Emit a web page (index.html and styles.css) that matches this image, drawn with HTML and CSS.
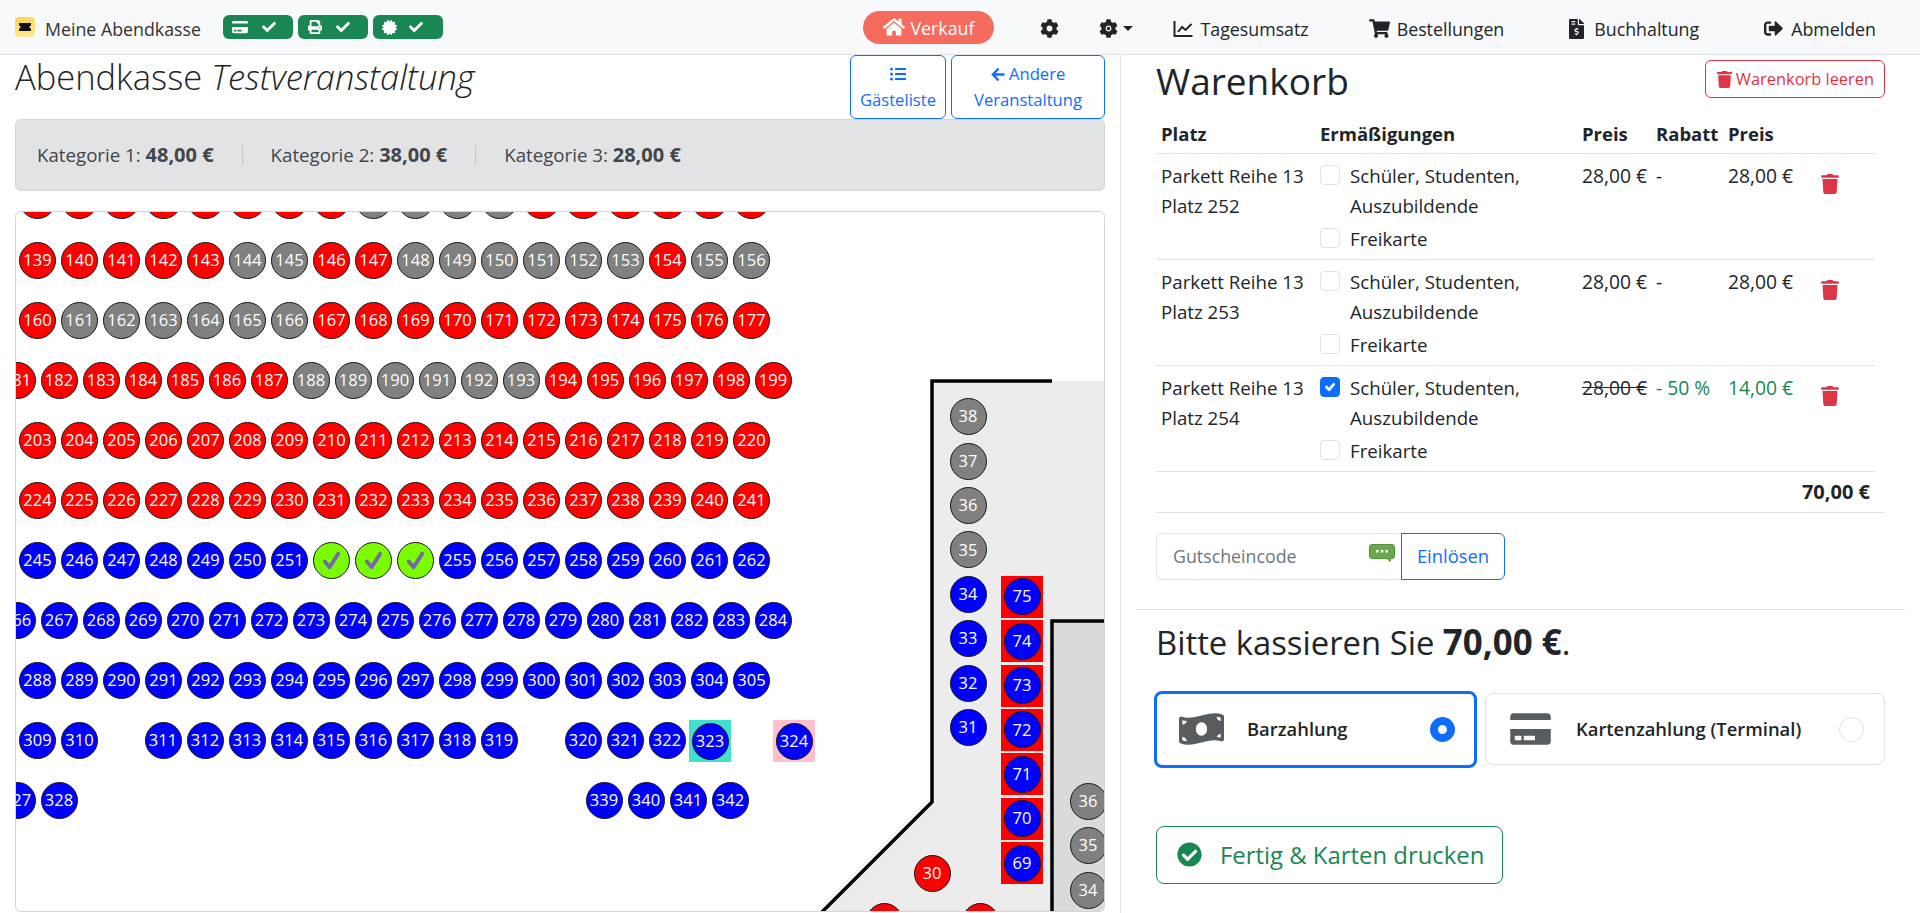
FILE: index.html
```html
<!DOCTYPE html>
<html lang="de">
<head>
    <meta charset="UTF-8">
    <meta name="viewport" content="width=device-width, initial-scale=1.0">
    <title>Meine Abendkasse</title>
    <link rel="stylesheet" href="styles.css">
</head>
<body>
    <svg class="icon-defs" xmlns="http://www.w3.org/2000/svg">
        <symbol id="i-home" viewBox="0 0 576 512"><path d="M280.37 148.26L96 300.11V464a16 16 0 0 0 16 16l112.06-.29a16 16 0 0 0 15.92-16V368a16 16 0 0 1 16-16h64a16 16 0 0 1 16 16v95.64a16 16 0 0 0 16 16.05L464 480a16 16 0 0 0 16-16V300L295.67 148.26a12.19 12.19 0 0 0-15.3 0zM571.6 251.47L488 182.56V44.05a12 12 0 0 0-12-12h-56a12 12 0 0 0-12 12v72.61L318.47 43a48 48 0 0 0-61 0L4.34 251.47a12 12 0 0 0-1.6 16.9l25.5 31A12 12 0 0 0 45.15 301l235.22-193.74a12.19 12.19 0 0 1 15.3 0L530.9 301a12 12 0 0 0 16.9-1.6l25.5-31a12 12 0 0 0-1.7-16.93z"/></symbol>
        <symbol id="i-cog" viewBox="0 0 512 512"><path d="M487.4 315.7l-42.6-24.6c4.3-23.2 4.3-47 0-70.2l42.6-24.6c4.9-2.8 7.1-8.6 5.5-14-11.1-35.6-30-67.8-54.7-94.6-3.8-4.1-10-5.1-14.8-2.3L380.8 110c-17.9-15.4-38.5-27.3-60.8-35.1V25.8c0-5.6-3.9-10.5-9.4-11.7-36.7-8.2-74.3-7.8-109.2 0-5.5 1.2-9.4 6.1-9.4 11.7V75c-22.2 7.9-42.8 19.8-60.8 35.1L88.7 85.5c-4.9-2.8-11-1.9-14.8 2.3-24.7 26.7-43.6 58.9-54.7 94.6-1.7 5.4.6 11.2 5.5 14L67.3 221c-4.3 23.2-4.3 47 0 70.2l-42.6 24.6c-4.9 2.8-7.1 8.6-5.5 14 11.1 35.6 30 67.8 54.7 94.6 3.8 4.1 10 5.1 14.8 2.3l42.6-24.6c17.9 15.4 38.5 27.3 60.8 35.1v49.2c0 5.6 3.9 10.5 9.4 11.7 36.7 8.2 74.3 7.8 109.2 0 5.5-1.2 9.4-6.1 9.4-11.7v-49.2c22.2-7.9 42.8-19.8 60.8-35.1l42.6 24.6c4.9 2.8 11 1.9 14.8-2.3 24.7-26.7 43.6-58.9 54.7-94.6 1.5-5.5-.7-11.3-5.6-14.1zM256 336c-44.1 0-80-35.9-80-80s35.9-80 80-80 80 35.9 80 80-35.9 80-80 80z"/></symbol>
        <symbol id="i-trash" viewBox="0 0 448 512"><path d="M432 32H312l-9.4-18.7A24 24 0 0 0 281.1 0H166.8a23.72 23.72 0 0 0-21.4 13.3L136 32H16A16 16 0 0 0 0 48v32a16 16 0 0 0 16 16h416a16 16 0 0 0 16-16V48a16 16 0 0 0-16-16zM53.2 467a48 48 0 0 0 47.9 45h245.8a48 48 0 0 0 47.9-45L416 128H32z"/></symbol>
        <symbol id="i-check" viewBox="0 0 512 512"><path d="M173.898 439.404l-166.4-166.4c-9.997-9.997-9.997-26.206 0-36.204l36.203-36.204c9.997-9.998 26.207-9.998 36.204 0L192 312.69 432.095 72.596c9.997-9.997 26.207-9.997 36.204 0l36.203 36.204c9.997 9.997 9.997 26.206 0 36.204l-294.4 294.401c-9.998 9.997-26.207 9.997-36.204-.001z"/></symbol>
        <symbol id="i-card" viewBox="0 0 576 512"><path d="M0 432c0 26.5 21.5 48 48 48h480c26.5 0 48-21.5 48-48V256H0v176zm192-68c0-6.6 5.4-12 12-12h136c6.6 0 12 5.4 12 12v40c0 6.6-5.4 12-12 12H204c-6.6 0-12-5.4-12-12v-40zm-128 0c0-6.6 5.4-12 12-12h72c6.6 0 12 5.4 12 12v40c0 6.6-5.4 12-12 12H76c-6.6 0-12-5.4-12-12v-40zM576 80v48H0V80c0-26.5 21.5-48 48-48h480c26.5 0 48 21.5 48 48z"/></symbol>
    </svg>

    <nav class="navbar">
        <a class="brand">
            <span class="brand-logo">
                <svg viewBox="0 0 20 20" width="20" height="20"><path class="ticket" d="M4 6h12v2.4a1.6 1.6 0 0 0 0 3.2V14H4v-2.4a1.6 1.6 0 0 0 0-3.2z"/></svg>
            </span>
            <span class="brand-name">Meine Abendkasse</span>
        </a>
        <div class="status-badges">
            <span class="status-badge">
                <svg class="badge-icon-card" fill="currentColor"><use href="#i-card"/></svg>
                <svg class="badge-check" fill="currentColor"><use href="#i-check"/></svg>
            </span>
            <span class="status-badge">
                <svg class="badge-icon-print" viewBox="0 0 512 512" fill="currentColor"><path d="M448 192V77.25c0-8.49-3.37-16.62-9.37-22.63L393.37 9.37c-6-6-14.14-9.37-22.63-9.37H96C78.33 0 64 14.33 64 32v160c-35.35 0-64 28.65-64 64v112c0 8.84 7.16 16 16 16h48v96c0 17.67 14.33 32 32 32h320c17.67 0 32-14.33 32-32v-96h48c8.84 0 16-7.16 16-16V256c0-35.35-28.65-64-64-64zm-64 256H128v-96h256v96zm0-224H128V64h192v48c0 8.84 7.16 16 16 16h48v96zm48 72c-13.25 0-24-10.75-24-24 0-13.26 10.75-24 24-24s24 10.74 24 24c0 13.25-10.75 24-24 24z"/></svg>
                <svg class="badge-check" fill="currentColor"><use href="#i-check"/></svg>
            </span>
            <span class="status-badge">
                <svg class="badge-icon-cert" viewBox="0 0 512 512" fill="currentColor"><path d="M458.622 255.92l45.985-45.005c13.708-12.977 7.316-36.039-10.664-40.339l-62.65-15.99 17.661-62.015c4.991-17.838-11.829-34.663-29.661-29.671l-61.994 17.667-15.984-62.671C337.085.197 313.765-6.276 300.99 7.228L256 53.57 211.011 7.229c-12.63-13.351-36.047-7.234-40.325 10.668l-15.984 62.671-61.995-17.667C74.87 57.907 58.056 74.738 63.046 92.572l17.661 62.015-62.65 15.99C.069 174.878-6.31 197.944 7.392 210.915l45.985 45.005-45.985 45.004c-13.708 12.977-7.316 36.039 10.664 40.339l62.65 15.99-17.661 62.015c-4.991 17.838 11.829 34.663 29.661 29.671l61.994-17.667 15.984 62.671c4.439 18.575 27.696 24.018 40.325 10.668L256 458.61l44.989 46.001c12.5 13.488 35.987 7.486 40.325-10.668l15.984-62.671 61.994 17.667c17.83 4.992 34.652-11.83 29.661-29.671l-17.661-62.015 62.65-15.99c17.98-4.3 24.371-27.362 10.664-40.339l-45.984-45.004z"/></svg>
                <svg class="badge-check" fill="currentColor"><use href="#i-check"/></svg>
            </span>
        </div>

        <div class="nav-right">
            <a class="nav-sale">
                <svg class="icon-home" fill="currentColor"><use href="#i-home"/></svg>
                <span class="nav-sale-text">Verkauf</span>
            </a>
            <a class="nav-icon"><svg class="icon-cog" fill="currentColor"><use href="#i-cog"/></svg></a>
            <a class="nav-icon nav-dropdown">
                <svg class="icon-cog" viewBox="0 0 512 512" fill="currentColor">
                    <use href="#i-cog"/>
                    <circle cx="256" cy="256" r="45"/>
                </svg>
                <span class="caret"></span>
            </a>
            <a class="nav-link nav-first">
                <svg class="icon-chart" viewBox="0 0 20 18" fill="none" stroke="currentColor" stroke-width="2">
                    <path d="M1.5 1v15h18"/>
                    <path d="M5 12l4-5 3.500 3 6-6"/>
                </svg>
                Tagesumsatz
            </a>
            <a class="nav-link nav-orders">
                <svg class="icon-cart" viewBox="0 0 576 512" fill="currentColor"><path d="M528.12 301.319l47.273-208C578.806 78.301 567.391 64 551.99 64H159.208l-9.166-44.81C147.758 8.021 137.93 0 126.529 0H24C10.745 0 0 10.745 0 24v16c0 13.255 10.745 24 24 24h69.883l70.248 343.435C147.325 417.1 136 435.222 136 456c0 30.928 25.072 56 56 56s56-25.072 56-56c0-15.674-6.447-29.835-16.824-40h209.647C430.447 426.165 424 440.326 424 456c0 30.928 25.072 56 56 56s56-25.072 56-56c0-22.172-12.888-41.332-31.579-50.405l5.517-24.276c3.413-15.018-8.002-29.319-23.403-29.319H218.117l-6.545-32h293.145c11.206 0 20.92-7.754 23.403-18.681z"/></svg>
                Bestellungen
            </a>
            <a class="nav-link">
                <svg class="icon-invoice" viewBox="0 0 384 512">
                    <path fill="currentColor" d="M224 136V0H24C10.700 0 0 10.700 0 24v464c0 13.300 10.700 24 24 24h336c13.300 0 24-10.700 24-24V160H248c-13.200 0-24-10.800-24-24z"/>
                    <path fill="currentColor" d="M384 121.900c0-6.300-2.500-12.400-7-16.900L279.100 7c-4.500-4.500-10.600-7-17-7H256v128h128z"/>
                    <path fill="none" stroke="#f8f9fa" stroke-width="32" d="M64 64h96M64 128h96"/>
                    <path fill="none" stroke="#f8f9fa" stroke-width="30" d="M240 260h-62c-36 0-36 62 0 62h32c36 0 36 62 0 62h-66M194 230v30M194 384v30"/>
                </svg>
                Buchhaltung
            </a>
            <a class="nav-link">
                <svg class="icon-signout" viewBox="0 0 512 512" fill="currentColor"><path d="M497 273L329 441c-15 15-41 4.500-41-17v-96H152c-13.300 0-24-10.700-24-24v-96c0-13.300 10.700-24 24-24h136V88c0-21.400 25.900-32 41-17l168 168c9.300 9.400 9.300 24.600 0 34zM192 436v-40c0-6.600-5.400-12-12-12H96c-17.700 0-32-14.300-32-32V160c0-17.700 14.300-32 32-32h84c6.600 0 12-5.400 12-12V76c0-6.600-5.400-12-12-12H96c-53 0-96 43-96 96v192c0 53 43 96 96 96h84c6.600 0 12-5.400 12-12z"/></svg>
                Abmelden
            </a>
        </div>
    </nav>

    <div class="page">
        <main class="left-col">
            <div class="title-row">
                <h1 class="page-title">Abendkasse <em>Testveranstaltung</em></h1>
                <div class="title-buttons">
                    <a class="btn-outline btn-guests">
                        <svg class="icon-list" viewBox="0 0 512 512" fill="currentColor"><path d="M48 48a48 48 0 1 0 48 48 48 48 0 0 0-48-48zm0 160a48 48 0 1 0 48 48 48 48 0 0 0-48-48zm0 160a48 48 0 1 0 48 48 48 48 0 0 0-48-48zm448 16H176a16 16 0 0 0-16 16v32a16 16 0 0 0 16 16h320a16 16 0 0 0 16-16v-32a16 16 0 0 0-16-16zm0-320H176a16 16 0 0 0-16 16v32a16 16 0 0 0 16 16h320a16 16 0 0 0 16-16V80a16 16 0 0 0-16-16zm0 160H176a16 16 0 0 0-16 16v32a16 16 0 0 0 16 16h320a16 16 0 0 0 16-16v-32a16 16 0 0 0-16-16z"/></svg>
                        <br>Gästeliste
                    </a>
                    <a class="btn-outline btn-event">
                        <svg class="icon-arrow" viewBox="0 0 448 512" fill="currentColor"><path d="M257.500 445.100l-22.200 22.200c-9.400 9.400-24.600 9.400-33.900 0L7 273c-9.400-9.400-9.400-24.600 0-33.900L201.400 44.700c9.400-9.400 24.600-9.400 33.900 0l22.200 22.200c9.500 9.500 9.300 25-.4 34.300L136.600 216H424c13.300 0 24 10.700 24 24v32c0 13.300-10.700 24-24 24H136.600l120.500 114.800c9.800 9.300 10 24.800.4 34.300z"/></svg>
                        Andere<br>Veranstaltung
                    </a>
                </div>
            </div>

            <div class="price-bar">
                <span>Kategorie 1: <b>48,00 €</b></span>
                <span class="price-sep"></span>
                <span>Kategorie 2: <b>38,00 €</b></span>
                <span class="price-sep"></span>
                <span>Kategorie 3: <b>28,00 €</b></span>
            </div>

            <div class="seatmap" id="seatmap">
                <svg class="stage" width="1090" height="700">
                    <!-- offset of the canvas on the page: 16, 212 -->
                    <polygon class="area-light" points="916,169 1090,169 1090,700 806,700 916,590"/>
                    <polygon class="area-dark" points="1036,409 1090,409 1090,700 1036,700"/>
                    <polyline class="wall" points="1036,169 916,169 916,590 806,700"/>
                    <polyline class="wall" points="1090,409 1036,409 1036,700"/>
                </svg>
            </div>
        </main>

        <aside class="right-col">
            <div class="cart-head">
                <h2 class="cart-title">Warenkorb</h2>
                <a class="btn-clear">
                    <svg class="icon-trash-sm" fill="currentColor"><use href="#i-trash"/></svg>
                    Warenkorb leeren
                </a>
            </div>

            <table class="cart-table">
                <colgroup>
                    <col class="col-seat"><col class="col-reduction"><col class="col-price"><col class="col-discount"><col class="col-final"><col>
                </colgroup>
                <thead>
                    <tr>
                        <th>Platz</th>
                        <th>Ermäßigungen</th>
                        <th>Preis</th>
                        <th>Rabatt</th>
                        <th>Preis</th>
                        <th></th>
                    </tr>
                </thead>
                <tbody>
                    <tr>
                        <td>Parkett Reihe 13<br>Platz 252</td>
                        <td>
                            <label class="check-row"><span class="check-box"></span><span>Schüler, Studenten, Auszubildende</span></label>
                            <label class="check-row"><span class="check-box"></span><span>Freikarte</span></label>
                        </td>
                        <td class="money">28,00 €</td>
                        <td class="money">-</td>
                        <td class="money">28,00 €</td>
                        <td><svg class="icon-trash" fill="currentColor"><use href="#i-trash"/></svg></td>
                    </tr>
                    <tr>
                        <td>Parkett Reihe 13<br>Platz 253</td>
                        <td>
                            <label class="check-row"><span class="check-box"></span><span>Schüler, Studenten, Auszubildende</span></label>
                            <label class="check-row"><span class="check-box"></span><span>Freikarte</span></label>
                        </td>
                        <td class="money">28,00 €</td>
                        <td class="money">-</td>
                        <td class="money">28,00 €</td>
                        <td><svg class="icon-trash" fill="currentColor"><use href="#i-trash"/></svg></td>
                    </tr>
                    <tr>
                        <td>Parkett Reihe 13<br>Platz 254</td>
                        <td>
                            <label class="check-row">
                                <span class="check-box checked">
                                    <svg viewBox="0 0 20 20" fill="none" stroke="#fff" stroke-width="3" stroke-linecap="round" stroke-linejoin="round"><path d="M6 10l3 3 5-6"/></svg>
                                </span>
                                <span>Schüler, Studenten, Auszubildende</span>
                            </label>
                            <label class="check-row"><span class="check-box"></span><span>Freikarte</span></label>
                        </td>
                        <td class="money"><s>28,00 €</s></td>
                        <td class="money text-green">- 50 %</td>
                        <td class="money text-green">14,00 €</td>
                        <td><svg class="icon-trash" fill="currentColor"><use href="#i-trash"/></svg></td>
                    </tr>
                </tbody>
            </table>
            <div class="cart-total">70,00 €</div>

            <div class="voucher">
                <div class="voucher-input">
                    <span>Gutscheincode</span>
                    <svg class="icon-voucher" viewBox="0 0 26 18">
                        <path fill="#6aa84f" stroke="#55903c" stroke-width="1" d="M3 .5h20a2.500 2.500 0 0 1 2.500 2.500v9a2.500 2.500 0 0 1-2.500 2.500h-1.500l-.5 3-3-3H3A2.500 2.500 0 0 1 .5 12V3A2.500 2.500 0 0 1 3 .5z"/>
                        <path fill="#fff" d="M7 6h2.500v2.500H7zM11.800 6h2.500v2.500h-2.500zM16.500 6H19v2.500h-2.500z"/>
                    </svg>
                </div>
                <a class="voucher-btn">Einlösen</a>
            </div>

            <hr class="section-line">

            <h3 class="pay-title">Bitte kassieren Sie <b>70,00 €</b>.</h3>

            <div class="pay-options">
                <div class="pay-option selected">
                    <svg class="pay-icon" viewBox="0 0 640 512" fill="currentColor"><path d="M621.160 54.460C582.370 38.190 543.550 32 504.750 32c-123.170-.01-246.330 62.340-369.500 62.340-30.890 0-61.760-3.920-92.650-13.720-3.470-1.100-6.950-1.620-10.350-1.620C15.040 79 0 92.320 0 110.810v317.260c0 12.630 7.230 24.600 18.840 29.460C57.630 473.810 96.450 480 135.250 480c123.170 0 246.340-62.350 369.510-62.350 30.890 0 61.760 3.920 92.650 13.720 3.470 1.100 6.950 1.620 10.350 1.620 17.210 0 32.250-13.320 32.250-31.810V83.930c-.01-12.640-7.240-24.600-18.850-29.470zM48 132.220c20.120 5.040 41.120 7.570 62.720 8.930C104.840 170.540 79 192.690 48 192.690v-60.470zm0 285v-47.780c34.370 0 62.180 27.270 63.710 61.400-22.530-1.810-43.590-6.310-63.710-13.620zM320 352c-44.190 0-80-42.990-80-96 0-53.020 35.820-96 80-96s80 42.980 80 96c0 53.030-35.830 96-80 96zm272 27.780c-17.520-4.390-35.710-6.850-54.320-8.440 5.870-26.080 27.500-45.880 54.320-49.280v57.720zm0-236.110c-30.890-3.910-54.860-29.700-55.810-61.550 19.540 2.170 38.090 6.230 55.810 12.660v48.890z"/></svg>
                    <span class="pay-label">Barzahlung</span>
                    <span class="pay-radio"></span>
                </div>
                <div class="pay-option">
                    <svg class="pay-icon" fill="currentColor"><use href="#i-card"/></svg>
                    <span class="pay-label">Kartenzahlung (Terminal)</span>
                    <span class="pay-radio"></span>
                </div>
            </div>

            <a class="btn-finish">
                <svg class="icon-finish" viewBox="0 0 512 512" fill="currentColor"><path d="M504 256c0 136.967-111.033 248-248 248S8 392.967 8 256 119.033 8 256 8s248 111.033 248 248zM227.314 387.314l184-184c6.248-6.248 6.248-16.379 0-22.627l-22.627-22.627c-6.248-6.249-16.379-6.250-22.628 0L216 308.118l-70.059-70.059c-6.248-6.248-16.379-6.248-22.628 0l-22.627 22.627c-6.248 6.248-6.248 16.379 0 22.627l104 104c6.249 6.249 16.379 6.249 22.628.001z"/></svg>
                Fertig &amp; Karten drucken
            </a>
        </aside>
    </div>

    <script src="seatmap.js"></script>
</body>
</html>
```

FILE: styles.css
```css
* {
    box-sizing: border-box;
    margin: 0;
    padding: 0;
}

html, body {
    height: 100%;
    overflow: hidden;
}

body {
    display: flex;
    flex-direction: column;
    background-color: #fff;
    color: #212529;
    font-family: 'Open Sans', 'Noto Sans', sans-serif;
    font-size: 18.7px;
    line-height: 30px;
}

.icon-defs {
    display: none;
}

/* Navbar */
.navbar {
    display: flex;
    align-items: center;
    flex: 0 0 55px;
    padding: 0 44px 0 15px;
    background-color: #f8f9fa;
    border-bottom: 1px solid #dee2e6;
    font-size: 17.8px;
}

.brand {
    display: flex;
    align-items: center;
    gap: 10px;
    margin-right: 22px;
    color: #333;
}

.brand-name {
    padding-top: 3px;
}

.brand-logo {
    width: 20px;
    height: 20px;
    border-radius: 4px;
    background: linear-gradient(160deg, #ffd54f, #ffe99a);
}

.brand-logo svg {
    display: block;
}

.ticket {
    fill: #111;
}

.status-badges {
    display: flex;
    gap: 5px;
}

.status-badge {
    display: flex;
    align-items: center;
    height: 24px;
    padding-left: 9px;
    background-color: #198754;
    border-radius: 6px;
    color: #fff;
    width: 70px;
}

.badge-icon-card {
    width: 16px;
    height: 14px;
    margin-right: 14px;
}

.badge-icon-print {
    width: 14px;
    height: 14px;
    margin: 0 14px 0 1px;
}

.badge-icon-cert {
    width: 15px;
    height: 15px;
    margin-right: 12px;
}

.badge-check {
    width: 14px;
    height: 14px;
}

.nav-right {
    display: flex;
    align-items: center;
    margin-left: auto;
    color: #212529;
}

.nav-sale {
    display: flex;
    align-items: center;
    gap: 6px;
    height: 33px;
    padding: 0 20px;
    margin-right: 46px;
    background-color: #f56c5e;
    border-radius: 17px;
    color: #fff;
}

.nav-sale-text {
    padding-top: 2px;
}

.icon-home {
    width: 22px;
    height: 20px;
}

.nav-icon {
    display: flex;
    align-items: center;
    padding-top: 3px;
    margin-right: 40px;
}

.icon-cog {
    width: 19px;
    height: 19px;
}

.caret {
    width: 0;
    height: 0;
    margin-left: 5px;
    border-top: 5px solid #212529;
    border-left: 5px solid transparent;
    border-right: 5px solid transparent;
}

.nav-link {
    display: flex;
    align-items: center;
    padding-top: 3px;
    margin-left: 65px;
}

.nav-first {
    margin-left: 0;
}

.nav-orders {
    margin-left: 60px;
}

.icon-chart {
    width: 20px;
    height: 18px;
    margin-right: 7px;
}

.icon-cart {
    width: 21px;
    height: 19px;
    margin-right: 7px;
}

.icon-invoice {
    width: 15px;
    height: 20px;
    margin-right: 10px;
}

.icon-signout {
    width: 19px;
    height: 19px;
    margin-right: 8px;
}

/* Page columns */
.page {
    display: flex;
    flex: 1;
    min-height: 0;
}

.left-col {
    display: flex;
    flex-direction: column;
    width: 1121px;
    padding: 0 15px 1px;
    border-right: 1px solid #dee2e6;
}

.title-row {
    display: flex;
    justify-content: space-between;
    height: 64px;
}

.page-title {
    font-size: 34.5px;
    font-weight: 300;
    line-height: 44px;
    color: #212529;
}

.title-buttons {
    display: flex;
    gap: 5px;
}

.btn-outline {
    display: block;
    padding: 5px 0;
    border: 1px solid #0d6efd;
    border-radius: 6px;
    color: #0d6efd;
    font-size: 16.6px;
    text-align: center;
    line-height: 26px;
}

.btn-guests {
    width: 96px;
}

.btn-event {
    width: 154px;
}

.icon-list {
    width: 18px;
    height: 16px;
    vertical-align: -2px;
}

.icon-arrow {
    width: 14px;
    height: 15px;
    vertical-align: -2px;
}

.price-bar {
    display: flex;
    align-items: center;
    gap: 28px;
    flex: 0 0 72px;
    padding-left: 21px;
    background-color: #e2e3e5;
    border: 1px solid #d3d6d8;
    border-radius: 6px;
    color: #41464b;
}

.price-bar b {
    font-size: 20px;
}

.price-sep {
    width: 1px;
    height: 20px;
    background-color: #c2c4c6;
}

/* Seat plan: seats are placed by seatmap.js */
.seatmap {
    position: relative;
    flex: 1;
    margin-top: 20px;
    overflow: hidden;
    border: 1px solid #d5d5d5;
    border-radius: 6px;
}

.stage {
    position: absolute;
    left: 0;
    top: 0;
}

.area-light {
    fill: #ececec;
}

.area-dark {
    fill: #dadada;
}

.wall {
    fill: none;
    stroke: #000;
    stroke-width: 3.5;
}

.seat {
    position: absolute;
    display: flex;
    align-items: center;
    justify-content: center;
    width: 37px;
    height: 37px;
    border: 1.5px solid #1a1a1a;
    border-radius: 50%;
    color: #fff;
    font-size: 16.5px;
    line-height: 1;
}

.seat.free {
    background-color: #00f;
}

.seat.sold {
    background-color: #f00;
}

.seat.blocked {
    background-color: #808080;
}

.seat.chosen {
    background-color: #7cfc00;
}

.seat.chosen svg {
    width: 23px;
    height: 23px;
}

.seat-mark {
    position: absolute;
    width: 42px;
    height: 42px;
}

.seat-mark.red {
    background-color: #f00;
}

.seat-mark.teal {
    background-color: #40e0d0;
}

.seat-mark.pink {
    background-color: #ffc0cb;
}

/* Cart */
.right-col {
    flex: 1;
    padding: 0 35px;
}

.cart-head {
    display: flex;
    align-items: flex-start;
    justify-content: space-between;
    height: 60px;
}

.cart-title {
    font-size: 37px;
    font-weight: 400;
    line-height: 52px;
}

.btn-clear {
    display: flex;
    align-items: center;
    gap: 4px;
    height: 38px;
    margin-top: 5px;
    padding: 0 10px 0 11px;
    border: 1px solid #dc3545;
    border-radius: 6px;
    color: #dc3545;
    font-size: 16.4px;
}

.icon-trash-sm {
    width: 15px;
    height: 17px;
}

.cart-table {
    width: 719px;
    table-layout: fixed;
    border-collapse: collapse;
    color: #212529;
}

.col-seat {
    width: 159px;
}

.col-reduction {
    width: 262px;
}

.col-price {
    width: 74px;
}

.col-discount {
    width: 72px;
}

.col-final {
    width: 93px;
}

.cart-table th {
    height: 38px;
    padding: 0 5px;
    text-align: left;
    font-size: 18.5px;
    font-weight: 700;
    white-space: nowrap;
    border-bottom: 1px solid #dee2e6;
}

.cart-table td {
    height: 106px;
    padding: 7px 5px 5px;
    vertical-align: top;
    border-bottom: 1px solid #dee2e6;
}

.cart-table td.money {
    font-size: 19.3px;
    white-space: nowrap;
}

.check-row {
    display: flex;
    gap: 10px;
    margin-bottom: 3px;
}

.check-row:last-child {
    margin-bottom: 0;
}

.check-box {
    flex: 0 0 20px;
    height: 20px;
    margin-top: 4px;
    background-color: #fff;
    border: 1px solid #dee2e6;
    border-radius: 4px;
}

.check-box.checked {
    background-color: #0d6efd;
    border-color: #0d6efd;
}

.check-box svg {
    display: block;
    width: 18px;
    height: 18px;
}

.text-green {
    color: #198754;
}

.icon-trash {
    display: block;
    width: 18px;
    height: 20px;
    margin-top: 13px;
    color: #dc3545;
}

.cart-total {
    width: 729px;
    height: 41px;
    padding: 5px 15px 0 0;
    text-align: right;
    font-size: 20px;
    font-weight: 700;
    border-bottom: 1px solid #dee2e6;
}

.voucher {
    display: flex;
    height: 47px;
    margin-top: 20px;
}

.voucher-input {
    display: flex;
    align-items: center;
    justify-content: space-between;
    width: 245px;
    padding: 0 6px 0 16px;
    border: 1px solid #dee2e6;
    border-right: none;
    border-radius: 6px 0 0 6px;
    color: #6c757d;
    font-size: 17.8px;
}

.icon-voucher {
    width: 26px;
    height: 18px;
    margin-top: -6px;
}

.voucher-btn {
    display: flex;
    align-items: center;
    justify-content: center;
    width: 104px;
    border: 1px solid #0d6efd;
    border-radius: 0 6px 6px 0;
    color: #0d6efd;
    font-size: 18.4px;
}

.section-line {
    margin: 29px -20px 15px;
    border: none;
    border-top: 1px solid #dee2e6;
}

.pay-title {
    font-size: 32.8px;
    font-weight: 400;
    line-height: 34px;
}

.pay-title b {
    font-size: 34.9px;
}

.pay-options {
    display: flex;
    align-items: center;
    gap: 8px;
    margin: 31px 0 0 -2px;
}

.pay-option {
    display: flex;
    align-items: center;
    height: 72px;
    flex: 0 0 400px;
    padding: 0 20px 0 22px;
    background-color: #fff;
    border: 1px solid #dee2e6;
    border-radius: 8px;
    font-size: 18.4px;
    font-weight: 600;
    color: #212529;
}

.pay-option.selected {
    flex-basis: 323px;
    height: 77px;
    padding: 0 19px 0 22px;
    border: 3px solid #0d6efd;
}

.pay-icon {
    flex: 0 0 45px;
    width: 45px;
    height: 36px;
    margin-right: 23px;
    color: #595c5f;
}

.pay-label {
    flex: 1;
}

.pay-radio {
    width: 25px;
    height: 25px;
    border: 1px solid #dee2e6;
    border-radius: 50%;
    background-color: #fff;
}

.selected .pay-radio {
    border: 8px solid #0d6efd;
}

.btn-finish {
    display: flex;
    align-items: center;
    gap: 18px;
    width: 347px;
    height: 58px;
    margin-top: 58px;
    padding-left: 20px;
    border: 1px solid #198754;
    border-radius: 8px;
    color: #198754;
    font-size: 23.9px;
}

.icon-finish {
    width: 25px;
    height: 25px;
}
```

FILE: seatmap.js
```js
// page position of the canvas, seat coordinates below are page coordinates
const MAP_LEFT = 16;
const MAP_TOP = 212;
const SEAT = 37;

const map = document.getElementById('seatmap');

const CHECK = '<svg viewBox="0 0 24 24" fill="none" stroke="#7566b0" stroke-width="4" stroke-linecap="round" stroke-linejoin="round"><path d="M5 13l5 6 9-14"/></svg>';

function addSeat(number, x, y, kind, mark) {
    if (mark) {
        const square = document.createElement('div');
        square.className = 'seat-mark ' + mark;
        square.style.left = (x - 21 - MAP_LEFT) + 'px';
        square.style.top = (y - 21 - MAP_TOP) + 'px';
        map.appendChild(square);
    }
    const seat = document.createElement('div');
    seat.className = 'seat ' + kind;
    seat.style.left = (x - SEAT / 2 - MAP_LEFT) + 'px';
    seat.style.top = (y - SEAT / 2 - MAP_TOP) + 'px';
    if (kind === 'chosen') {
        seat.innerHTML = CHECK;
    } else if (number) {
        seat.textContent = number;
    }
    map.appendChild(seat);
}

// row: first number, last number, x of first, y, and a function for the colour
function addRow(first, last, x, y, kind) {
    for (let n = first; n <= last; n++) {
        addSeat(n, x + (n - first) * 42, y, kind(n));
    }
}

function ranges(list, fallback) {
    return function (n) {
        for (const r of list) {
            if (n >= r[0] && n <= r[1]) {
                return r[2];
            }
        }
        return fallback;
    };
}

const X1 = 37.5;
const X2 = 17;

// row above the visible part: only the lower edge of the seats shows, no numbers
const topRowBlocked = [8, 9, 10, 11];
for (let i = 0; i < 18; i++) {
    addSeat(null, X1 + i * 42, 200.5, topRowBlocked.includes(i) ? 'blocked' : 'sold');
}

addRow(139, 156, X1, 260.5, ranges([[144, 145, 'blocked'], [148, 153, 'blocked'], [155, 156, 'blocked']], 'sold'));
addRow(160, 177, X1, 320.5, ranges([[161, 166, 'blocked']], 'sold'));
addRow(181, 199, X2, 380.5, ranges([[188, 193, 'blocked']], 'sold'));
addRow(203, 220, X1, 440.5, () => 'sold');
addRow(224, 241, X1, 500.5, () => 'sold');
addRow(245, 262, X1, 560.5, ranges([[252, 254, 'chosen']], 'free'));
addRow(266, 284, X2, 620.5, () => 'free');
addRow(288, 305, X1, 680.5, () => 'free');

addRow(309, 310, X1, 740.5, () => 'free');
addRow(311, 319, 163, 740.5, () => 'free');
addRow(320, 322, 583, 740.5, () => 'free');
addSeat(323, 710, 741, 'free', 'teal');
addSeat(324, 794, 741, 'free', 'pink');

addRow(327, 328, X2, 800.5, () => 'free');
addRow(339, 342, 604, 800.5, () => 'free');

// side block, numbered from the top down
const SIDE_PITCH = 44.4;
for (let i = 0; i < 8; i++) {
    addSeat(38 - i, 968, 416.7 + i * SIDE_PITCH, i < 4 ? 'blocked' : 'free');
}
for (let i = 0; i < 7; i++) {
    addSeat(75 - i, 1022, 596.7 + i * SIDE_PITCH, 'free', 'red');
}
addSeat(30, 932, 873, 'sold');
addSeat(null, 884, 921, 'sold');
addSeat(null, 980, 921, 'sold');
addSeat(36, 1088, 801, 'blocked');
addSeat(35, 1088, 845.6, 'blocked');
addSeat(34, 1088, 890, 'blocked');
```
